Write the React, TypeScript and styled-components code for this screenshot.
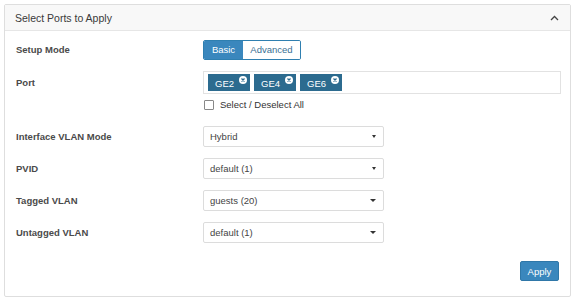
import React from "react";
import styled, { createGlobalStyle } from "styled-components";

const Global = createGlobalStyle`
  body { margin: 0; background: #fff; font-family: "Liberation Sans", Arial, sans-serif; }
`;

const Page = styled.div`
  padding: 4px 5px 5px 4px;
`;

const Panel = styled.section`
  border: 1px solid #dedede;
  border-radius: 2px;
  height: 293px;
  box-sizing: border-box;
  display: flex;
  flex-direction: column;
`;

const Header = styled.div`
  height: 25px;
  background: #f8f8f8;
  border-bottom: 1px solid #e6e6e6;
  display: flex;
  align-items: center;
  justify-content: space-between;
  padding: 0 11px 0 10px;
  font-size: 10.5px;
  color: #3a3a3a;
`;

const Body = styled.div`
  padding: 8px 11px 0 11px;
  display: flex;
  flex-direction: column;
  flex: 1;
`;

const Row = styled.div<{ $h: number; $align?: string }>`
  display: grid;
  grid-template-columns: 187px 1fr;
  height: ${(p) => p.$h}px;
  align-items: ${(p) => p.$align || "center"};
`;

const Label = styled.div`
  font-size: 9.5px;
  font-weight: bold;
  color: #4a4a4a;
`;

const Seg = styled.div`
  display: inline-flex;
  border: 1px solid #2f7fb0;
  border-radius: 2px;
  height: 20px;
  box-sizing: border-box;
  overflow: hidden;
`;

const SegBtn = styled.div<{ $active?: boolean }>`
  display: flex;
  align-items: center;
  justify-content: center;
  font-size: 9.5px;
  width: ${(p) => (p.$active ? 39 : 57)}px;
  background: ${(p) => (p.$active ? "#3a87bd" : "#fff")};
  color: ${(p) => (p.$active ? "#fff" : "#3a6f94")};
`;

const TagBox = styled.div`
  border: 1px solid #e2e2e2;
  height: 23px;
  box-sizing: border-box;
  width: 358px;
  display: flex;
  align-items: center;
  gap: 4px;
  padding-left: 4px;
`;

const Tag = styled.div`
  background: #2c6b8f;
  color: #fff;
  font-size: 9.5px;
  height: 17px;
  width: 42px;
  box-sizing: border-box;
  padding: 1px 0 0 7px;
  display: flex;
  align-items: center;
  position: relative;
`;

const TagX = styled.span`
  position: absolute;
  right: 3px;
  top: 2px;
  width: 8px;
  height: 8px;
  border-radius: 50%;
  background: #fff;
  display: flex;
  align-items: center;
  justify-content: center;
`;

const CheckRow = styled.label`
  display: flex;
  align-items: center;
  gap: 6px;
  font-size: 9.5px;
  color: #333;
  margin-top: 5px;
  padding-left: 1px;
`;

const Box = styled.span`
  width: 8px;
  height: 8px;
  border: 1px solid #888;
  border-radius: 1px;
  background: #fff;
`;

const Select = styled.div`
  width: 181px;
  height: 21px;
  box-sizing: border-box;
  border: 1px solid #dcdcdc;
  border-radius: 2px;
  display: flex;
  align-items: center;
  justify-content: space-between;
  padding: 0 7px 0 6px;
  font-size: 9.5px;
  color: #444;
  background: #fff;
`;

const Caret = styled.span<{ $big?: boolean }>`
  width: 0;
  height: 0;
  border-left: ${(p) => (p.$big ? 3.5 : 2.5)}px solid transparent;
  border-right: ${(p) => (p.$big ? 3.5 : 2.5)}px solid transparent;
  border-top: ${(p) => (p.$big ? 3.5 : 3)}px solid #333;
`;

const Footer = styled.div`
  display: flex;
  justify-content: flex-end;
  margin-top: auto;
  padding: 0 0 15px 0;
`;

const ApplyBtn = styled.button`
  font-family: inherit;
  font-size: 9.5px;
  color: #fff;
  background: #3a87bd;
  border: 1px solid #2f77a8;
  border-radius: 2px;
  width: 39px;
  height: 20px;
  padding: 0;
`;

const Spacer = styled.div<{ $h: number }>`
  height: ${(p) => p.$h}px;
`;

const XIcon = () => (
  <svg width="6" height="6" viewBox="0 0 6 6">
    <path d="M1.5 1.5 L4.5 4.5 M4.5 1.5 L1.5 4.5" stroke="#2c6b8f" strokeWidth="1.3" />
  </svg>
);

const Chevron = () => (
  <svg width="9" height="6" viewBox="0 0 9 6">
    <path d="M1 5 L4.5 1.5 L8 5" fill="none" stroke="#444" strokeWidth="1.3" />
  </svg>
);

const selects = [
  { label: "Interface VLAN Mode", value: "Hybrid", big: false },
  { label: "PVID", value: "default (1)", big: false },
  { label: "Tagged VLAN", value: "guests (20)", big: true },
  { label: "Untagged VLAN", value: "default (1)", big: true },
];

export default function App() {
  return (
    <>
      <Global />
      <Page>
        <Panel>
          <Header>
            <span>Select Ports to Apply</span>
            <Chevron />
          </Header>
          <Body>
            <Row $h={20}>
              <Label>Setup Mode</Label>
              <div>
                <Seg>
                  <SegBtn $active>Basic</SegBtn>
                  <SegBtn>Advanced</SegBtn>
                </Seg>
              </div>
            </Row>
            <Spacer $h={12} />
            <Row $h={42} $align="start">
              <Label style={{ marginTop: 6 }}>Port</Label>
              <div>
                <TagBox>
                  {["GE2", "GE4", "GE6"].map((t) => (
                    <Tag key={t}>
                      {t}
                      <TagX>
                        <XIcon />
                      </TagX>
                    </Tag>
                  ))}
                </TagBox>
                <CheckRow>
                  <Box />
                  Select / Deselect All
                </CheckRow>
              </div>
            </Row>
            <Spacer $h={13} />
            {selects.map((s, i) => (
              <React.Fragment key={i}>
                {i > 0 && <Spacer $h={11} />}
                <Row $h={21}>
                  <Label>{s.label}</Label>
                  <Select>
                    <span>{s.value}</span>
                    <Caret $big={s.big} />
                  </Select>
                </Row>
              </React.Fragment>
            ))}
            <Footer>
              <ApplyBtn>Apply</ApplyBtn>
            </Footer>
          </Body>
        </Panel>
      </Page>
    </>
  );
}
